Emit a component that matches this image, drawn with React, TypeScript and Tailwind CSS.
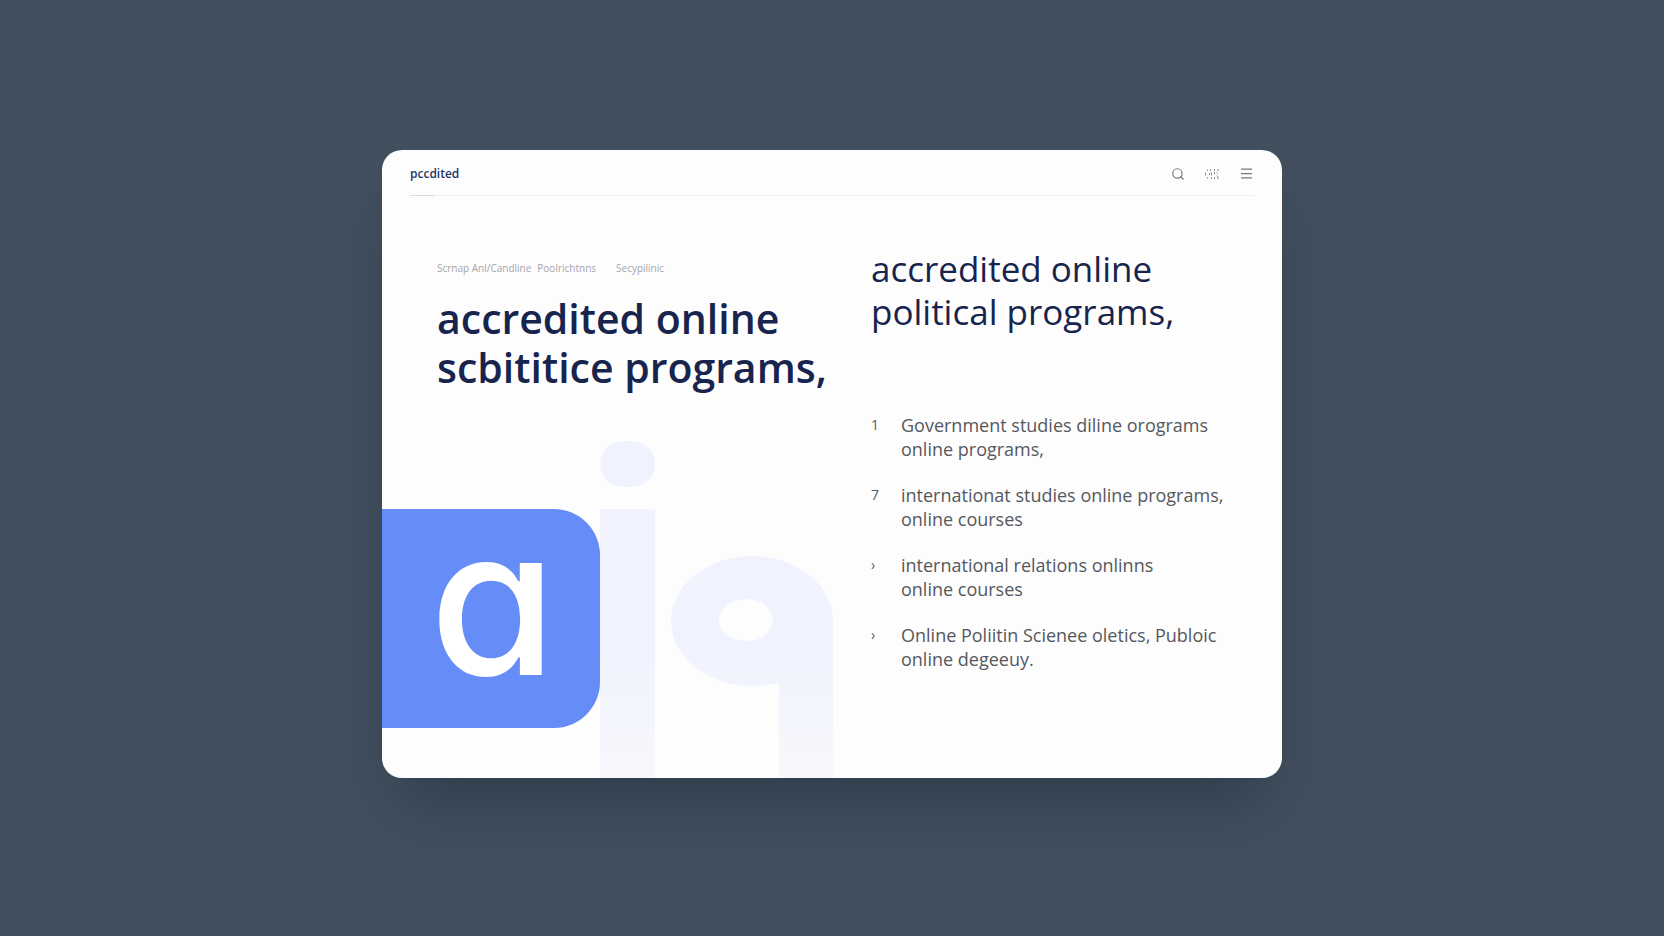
import React from "react";
import { Menu, Search } from "lucide-react";

const tags = ["Scrnap Anl/Candline", "Poolrichtnns", "Secypilinic"];

const programs = [
  { marker: "1", lines: ["Government studies diline orograms", "online programs,"] },
  { marker: "7", lines: ["internationat studies online programs,", "online courses"] },
  { marker: "›", lines: ["international relations onlinns", "online courses"] },
  { marker: "›", lines: ["Online Poliitin Scienee oletics, Publoic", "online degeeuy."] },
];

const DotsIcon = () => (
  <svg width="14" height="12" viewBox="0 0 14 12" fill="none" stroke="currentColor" aria-hidden="true">
    <path d="M.5 4.500v3M2.500 3V1.500M2.500 9v1.500M4.500 5v2M5.500 1v2M6.500 4.500v3M6.500 9v2M9.500 4v2.500M9.500 1v2M9.500 9v2M13 1v2.500M11.500 4.500l1.500 1.500M11.500 7.500l2 2M13 9v2" />
  </svg>
);

const TopBar = () => (
  <header className="mx-7">
    <div className="flex h-[45px] items-center justify-between pt-0.5">
      <a href="#" className="text-[12px] font-semibold leading-4 text-[#1f3566]">
        pccdited
      </a>
      <nav className="flex items-center gap-5 text-[#75787d]">
        <button type="button" aria-label="Search">
          <Search size={14} strokeWidth={2} />
        </button>
        <button type="button" aria-label="Apps" className="text-[#8f9296]">
          <DotsIcon />
        </button>
        <button type="button" aria-label="Menu">
          <Menu size={15} strokeWidth={2} />
        </button>
      </nav>
    </div>
    <div className="h-px bg-[#f0f1f3]">
      <div className="h-px w-6 bg-[#d9dbde]" />
    </div>
  </header>
);

const Artwork = () => (
  <div className="mt-auto flex items-start" aria-hidden="true">
    {/* Brand tile */}
    <div className="mt-[68px] flex h-[219px] w-[218px] items-center justify-center rounded-r-[46px] bg-[#668cf8] pb-9 pl-1">
      <span className="font-['Inter',sans-serif] text-[205px] font-medium leading-none text-white [font-feature-settings:'cv11']">
        a
      </span>
    </div>
    {/* Background shapes */}
    <svg width="235" height="337" viewBox="0 0 235 337">
      <defs>
        <linearGradient id="fade" gradientUnits="userSpaceOnUse" x1="0" y1="0" x2="0" y2="337">
          <stop offset="0" stopColor="#f0f3fe" />
          <stop offset="0.6" stopColor="#f0f3fe" />
          <stop offset="1" stopColor="#f7f8fc" />
        </linearGradient>
      </defs>
      <g fill="url(#fade)">
        <rect x="0" y="0" width="55" height="46" rx="25" ry="22" />
        <rect x="0" y="68" width="55" height="269" />
        <ellipse cx="152" cy="180" rx="81" ry="65" />
        <rect x="179" y="180" width="54" height="157" />
      </g>
      <ellipse cx="146" cy="179" rx="27" ry="21" fill="#fdfdfe" />
    </svg>
  </div>
);

const App = () => {
  return (
    <main className="flex min-h-screen items-center justify-center bg-[#414f5f] px-6 pb-2 font-['Open_Sans',sans-serif]">
      <div className="w-full max-w-[900px] overflow-hidden rounded-[20px] bg-[#fdfdfe] shadow-[0_40px_60px_-20px_rgba(20,30,42,0.4)]">
        <TopBar />
        <div className="grid grid-cols-[489fr_411fr]">
          <section className="flex flex-col pt-16">
            <ul className="flex pl-[55px] text-[10px] leading-4 text-[#a3a5a8]">
              <li className="mr-1.5">{tags[0]}</li>
              <li className="mr-5">{tags[1]}</li>
              <li>{tags[2]}</li>
            </ul>
            <h1 className="mt-[18px] mb-[49px] whitespace-nowrap pl-[55px] text-[41px] font-semibold leading-[49px] text-[#17244d]">
              accredited online
              <br />
              scbititice programs,
            </h1>
            <Artwork />
          </section>

          <section className="pt-[51px]">
            <h2 className="whitespace-nowrap text-[35px] leading-[43px] text-[#17244d]">
              accredited online
              <br />
              political programs,
            </h2>
            <ol className="mt-20 flex flex-col gap-[22px] text-[18px] leading-6 text-[#55585d]">
              {programs.map((program, i) => (
                <li key={i} className="flex">
                  <span className="w-[30px] text-[14px]">{program.marker}</span>
                  <p className="whitespace-nowrap">
                    {program.lines[0]}
                    <br />
                    {program.lines[1]}
                  </p>
                </li>
              ))}
            </ol>
          </section>
        </div>
      </div>
    </main>
  );
};

export default App;
